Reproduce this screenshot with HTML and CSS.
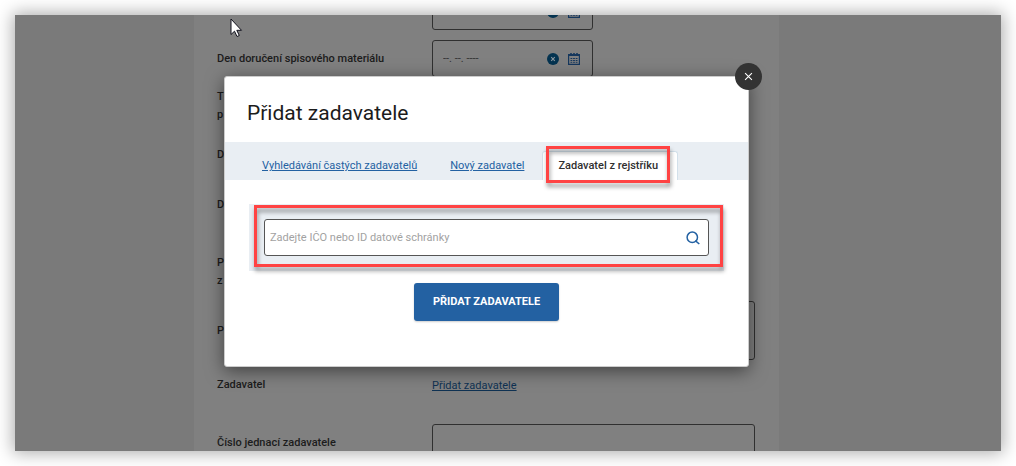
FILE: index.html
```html
<!DOCTYPE html>
<html lang="cs">
<head>
<meta charset="utf-8">
<title>Přidat zadavatele</title>
<link rel="stylesheet" href="styles.css">
</head>
<body>
<svg class="sprite" aria-hidden="true">
  <symbol id="clear" viewBox="0 0 12 12"><circle cx="6" cy="6" r="6" fill="#043350"/><path d="M4.200 4.200l3.600 3.600M7.800 4.200L4.200 7.800" stroke="#8d989f" stroke-width="1.100"/></symbol>
  <symbol id="calendar" viewBox="0 0 12 12"><path d="M.6 1.500h10.800v9.900H.6z" fill="none" stroke="#15375d" stroke-width="1.200"/><path d="M0 1h12v2H0zM2.200 0h1.600v2H2.200zM5.200 0h1.600v2H5.200zM8.200 0h1.600v2H8.200z" fill="#15375d"/><path d="M2.500 5.500h7M2.500 7.500h7M2.500 9.300h7" stroke="#15375d" stroke-width="1" stroke-dasharray="1.800 .8"/></symbol>
</svg>
<div class="stage">
  <main class="page">
    <form class="form">
      <div class="row">
        <span class="label"></span>
        <div class="date"><input aria-label="Datum" placeholder="--. --. ----"><button type="button" aria-label="Vymazat"><svg><use href="#clear"/></svg></button><button type="button" aria-label="Kalendář"><svg><use href="#calendar"/></svg></button></div>
      </div>
      <div class="row">
        <label class="label" for="delivered">Den doručení spisového materiálu</label>
        <div class="date"><input id="delivered" placeholder="--. --. ----"><button type="button" aria-label="Vymazat"><svg><use href="#clear"/></svg></button><button type="button" aria-label="Kalendář"><svg><use href="#calendar"/></svg></button></div>
      </div>
      <div class="row"><span class="label">T<br>p</span></div>
      <div class="row row-medium"><span class="label">D</span></div>
      <div class="row row-medium"><span class="label">D</span></div>
      <div class="row row-spaced"><span class="label">P<br>z</span></div>
      <div class="row"><label class="label" for="note">P</label><textarea id="note" class="field field-tall"></textarea></div>
      <div class="row row-link"><span class="label">Zadavatel</span><a class="link" href="#">Přidat zadavatele</a></div>
      <div class="row"><label class="label" for="number">Číslo jednací zadavatele</label><input id="number" class="field"></div>
    </form>
  </main>
  <div class="overlay">
    <section class="modal" role="dialog" aria-labelledby="title">
      <button class="close" type="button" aria-label="Zavřít"><svg viewBox="0 0 10 10"><path d="M1.200 1.200l7.600 7.600M8.800 1.200L1.200 8.800" stroke="#fff" stroke-width="1.200"/></svg></button>
      <h1 class="title" id="title">Přidat zadavatele</h1>
      <nav class="tabs">
        <a class="tab" href="#">Vyhledávání častých zadavatelů</a>
        <a class="tab" href="#">Nový zadavatel</a>
        <a class="tab tab-active" href="#" aria-current="page">Zadavatel z rejstříku<span class="mark mark-tab"></span></a>
      </nav>
      <div class="content">
        <div class="search">
          <div class="search-box">
            <input aria-label="IČO nebo ID datové schránky" placeholder="Zadejte IČO nebo ID datové schránky">
            <button type="button" aria-label="Hledat"><svg viewBox="0 0 14 14" fill="none" stroke="#2361a2" stroke-width="1.500"><circle cx="6.300" cy="6.300" r="5.200"/><path d="M9.300 9.600l4 3.400"/></svg></button>
          </div>
          <span class="mark mark-search"></span>
        </div>
        <button class="submit" type="button">PŘIDAT ZADAVATELE</button>
      </div>
    </section>
  </div>
  <svg class="cursor" viewBox="0 0 13 20" aria-hidden="true"><path d="M1 1v15.500l3.500-3.300 2.500 5.300 2.300-1-2.500-5.200h4.700z" fill="#fff" stroke="#10101c" stroke-width="1"/></svg>
</div>
</body>
</html>
```
FILE: styles.css
```css
* { box-sizing: border-box; }

body {
  margin: 0;
  min-height: 100vh;
  padding: 15px;
  display: flex;
  background: #fff;
  color: #1c1c1c;
  font: 11px/18px Roboto, sans-serif;
}

button, input, textarea { font: inherit; color: inherit; }
button { border: 0; padding: 0; background: none; }
button svg { display: block; width: 100%; height: 100%; }
.sprite { position: absolute; width: 0; height: 0; }

.stage {
  position: relative;
  flex: 1;
  height: calc(100vh - 30px);
  overflow: clip;
  padding-right: 43px;
  background: #7a7a7a;
  box-shadow: 0 0 16px 2px rgba(0, 0, 0, .33);
}

.page {
  max-width: 585px;
  margin: 0 auto;
  background: #808080;
}

/* The form is scrolled down by a part of its first row. */
.form {
  display: flex;
  flex-direction: column;
  gap: 10px;
  margin-top: -22px;
  padding: 0 24px 0 23px;
}

.row {
  display: grid;
  grid-template-columns: 215px 1fr;
  align-items: center;
  min-height: 37px;
}
.row-medium { min-height: 40px; }
.row-spaced { min-height: 57px; padding-top: 17px; }
.row-link { min-height: 44px; padding-bottom: 15px; }

.label { padding-top: 1px; font-weight: 500; color: #1c1c1c; }
.link { padding-top: 2px; color: #0f3253; justify-self: start; }

.date {
  display: flex;
  align-items: center;
  gap: 9px;
  width: 161px;
  height: 37px;
  padding: 0 12px 0 10px;
  border: 1px solid #303030;
  border-radius: 3px;
}
.date input { flex: 1; min-width: 0; padding: 0; border: 0; background: none; }
.date input::placeholder { color: #333; opacity: 1; }
.date button { width: 12px; height: 12px; }

.field {
  width: 100%;
  height: 37px;
  border: 1px solid #303030;
  border-radius: 3px;
  background: none;
}
.field-tall { display: block; height: 59px; resize: none; }

.overlay {
  position: absolute;
  inset: 0;
  padding: 61px 43px 0 0;
}

.modal {
  position: relative;
  max-width: 525px;
  margin: 0 auto;
  border: 1px solid #ccc;
  border-radius: 3px;
  background: #fff;
  box-shadow: 0 4px 18px rgba(0, 0, 0, .5);
}

.close {
  position: absolute;
  top: -14px;
  right: -14px;
  width: 27px;
  height: 27px;
  padding: 9px;
  border-radius: 50%;
  background: #333;
}

.title {
  margin: 0;
  padding: 24px 22px 16px;
  font-size: 21px;
  line-height: 25px;
  font-weight: 400;
  color: #1c1c1c;
}

.tabs {
  display: flex;
  align-items: flex-end;
  gap: 3px;
  height: 38px;
  padding-left: 22px;
  background: #e9eef3;
}
.tab {
  position: relative;
  padding: 6px 15px;
  line-height: 17px;
  color: #2361a2;
}
.tab-active {
  border: 1px solid #d3e0ea;
  border-bottom: 0;
  border-radius: 3px 3px 0 0;
  padding: 5px 19px 6px 15px;
  background: #fff;
  color: #303030;
  font-weight: 500;
  text-decoration: none;
}

.content {
  display: flex;
  flex-direction: column;
  align-items: center;
  gap: 12px;
  padding: 24px 24px 45px;
}

.search {
  position: relative;
  align-self: stretch;
  padding: 15px;
  background: #e9eef3;
}
.search-box {
  display: flex;
  align-items: center;
  height: 37px;
  padding: 0 8px 0 5px;
  border: 1px solid #555;
  border-radius: 3px;
  background: #fff;
}
.search-box input { flex: 1; padding: 0; border: 0; background: none; outline: 0; }
.search-box input::placeholder { color: #a2a2a2; opacity: 1; }
.search-box button { width: 14px; height: 14px; }

.submit {
  height: 38px;
  padding: 0 19px;
  border-radius: 3px;
  background: #2361a2;
  box-shadow: 0 1px 2px rgba(0, 0, 0, .2);
  color: #fff;
  font-weight: 700;
}

/* Red highlight frames */
.mark {
  position: absolute;
  border: 3px solid #ff4343;
  filter: drop-shadow(1px 4px 2px rgba(0, 0, 0, .4));
  pointer-events: none;
}
.mark-tab { inset: -6px 7px -3px 3px; }
.mark-search { inset: 1px 1px 4px 5px; }

.cursor {
  position: absolute;
  top: 3px;
  left: 215px;
  width: 13px;
  height: 20px;
}
```
